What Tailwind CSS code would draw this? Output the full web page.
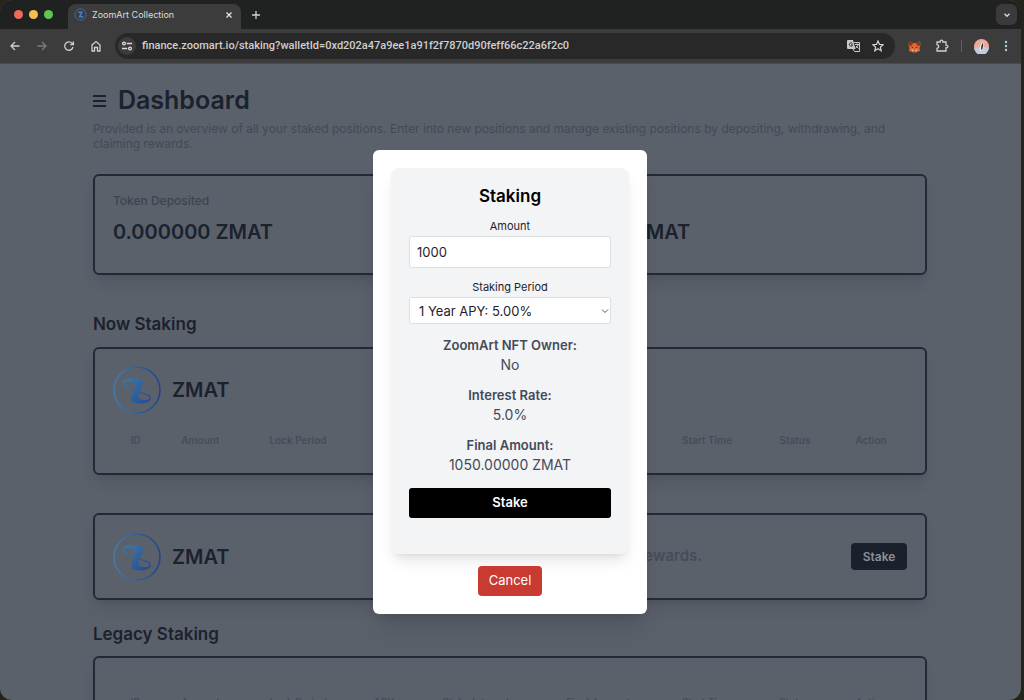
<!DOCTYPE html>
<html lang="en">

<head>
    <meta charset="UTF-8">
    <meta name="viewport" content="width=device-width, initial-scale=1.0">
    <title>ZoomArt Collection</title>
    <script src="https://cdn.jsdelivr.net/npm/@tailwindcss/browser@4"></script>
</head>

<body class="h-screen overflow-hidden bg-[#24241a] pr-[3px] font-['Inter','Liberation_Sans',sans-serif]">
    <!-- shared logo -->
    <svg class="absolute size-0" aria-hidden="true">
        <defs>
            <linearGradient id="ring" x1="0" y1="0" x2="1" y2="0">
                <stop offset="0" stop-color="#437bab" />
                <stop offset="1" stop-color="#234487" />
            </linearGradient>
            <linearGradient id="zed" x1="0" y1="0" x2="1" y2="1">
                <stop offset="0" stop-color="#3f78a8" />
                <stop offset="1" stop-color="#234a93" />
            </linearGradient>
            <symbol id="logo" viewBox="0 0 48 48">
                <circle cx="24" cy="24" r="23" fill="none" stroke="url(#ring)" stroke-width="1.6" />
                <path fill="url(#zed)" d="M12 14C16 11.500 31 11 30 17C29.500 21.500 25.500 26 25.500 30.500C25.500 34 32 35.500 37.500 32.500C36 37.500 28 37.700 24 37.300C19 37 17.500 35 18.500 31C19.500 27 22.500 23 22.300 19.500C22 16 17 15 11.500 15.500Z" />
                <path fill="none" stroke="url(#zed)" stroke-width="1.400" d="M20 13.500C14 12.700 10 14 10.700 17C11.500 21 18 23.500 24 25.500C31 27.500 37 28.500 37.300 32C37.300 35 32 36 28 36" />
            </symbol>
        </defs>
    </svg>

    <div class="flex h-full flex-col overflow-hidden rounded-xl bg-[#5a616b]">
        <!-- tab strip -->
        <div class="flex h-[29px] shrink-0 items-center bg-[#202221] pr-1 pl-[14px]">
            <div class="flex w-[54px] gap-[6px]">
                <span class="size-[9px] rounded-full bg-[#ed6a5e]"></span>
                <span class="size-[9px] rounded-full bg-[#f5bf4f]"></span>
                <span class="size-[9px] rounded-full bg-[#61c554]"></span>
            </div>
            <div class="flex h-full w-[173px] items-center self-end pt-1">
                <div class="flex h-full w-full items-center rounded-t-lg bg-[#3c3c3c] pr-2 pb-1 pl-[6px] text-[9px] text-[#dedede]">
                    <svg class="mr-[5px] size-[13px]" viewBox="0 0 14 14" fill="none" stroke="#3f7fd0">
                        <circle cx="7" cy="7" r="6" stroke-dasharray="2 .6" />
                        <path d="M4.500 4.500H8.500L6 9.500H10" stroke-width="1.600" />
                    </svg>
                    <span class="grow">ZoomArt Collection</span>
                    <button aria-label="Close tab">
                        <svg class="size-2" viewBox="0 0 8 8" stroke="#e4e4e4" stroke-width="1.300"><path d="M1.500 1.500l5 5M6.500 1.500l-5 5" /></svg>
                    </button>
                </div>
            </div>
            <button class="ml-[10px]" aria-label="New tab">
                <svg class="size-[10px]" viewBox="0 0 10 10" stroke="#d0d0d0" stroke-width="1.300"><path d="M5 1v8M1 5h8" /></svg>
            </button>
            <button class="ml-auto flex size-[21px] items-center justify-center rounded-md bg-[#3a3a3a]" aria-label="Search tabs">
                <svg class="size-2" viewBox="0 0 8 8" fill="none" stroke="#d8d8d8" stroke-width="1.400"><path d="M1.500 2.800L4 5.200l2.500-2.400" /></svg>
            </button>
        </div>

        <!-- toolbar -->
        <div class="flex h-[35px] shrink-0 items-center border-b border-[#4a4b4d] bg-[#3c3c3c] pr-[13px] pl-[9px]">
            <div class="flex w-[106px] gap-[15px]">
                <button aria-label="Back"><svg class="size-3" viewBox="0 0 12 12" fill="none" stroke="#cfcfcf" stroke-width="1.300"><path d="M10.500 6H2M6 2L2 6l4 4" /></svg></button>
                <button aria-label="Forward"><svg class="size-3" viewBox="0 0 12 12" fill="none" stroke="#7c7c7c" stroke-width="1.300"><path d="M1.500 6H10M6 2l4 4-4 4" /></svg></button>
                <button aria-label="Reload"><svg class="size-3" viewBox="0 0 12 12" fill="none" stroke="#cfcfcf" stroke-width="1.300"><path d="M10 7A4.200 4.200 0 1 1 9 3.200L10.200 4.500M10.400 1.500v3.200H7.200" /></svg></button>
                <button aria-label="Home"><svg class="size-3" viewBox="0 0 12 12" fill="none" stroke="#cfcfcf" stroke-width="1.300"><path d="M2 5l4-3.500L10 5v6H7.500V7.500h-3V11H2Z" /></svg></button>
            </div>
            <div class="flex h-[26px] grow items-center rounded-full bg-[#282828] pr-[11px] pl-[3px]">
                <button class="mr-[6px] flex size-[18px] items-center justify-center rounded-full bg-[#3c3c3c]" aria-label="Site information">
                    <svg class="size-3" viewBox="0 0 12 12" fill="none" stroke="#dcdcdc" stroke-width="1.300">
                        <circle cx="3" cy="3.500" r="1.400" /><path d="M5.800 3.500H11M1 8.500h5.200" /><circle cx="9" cy="8.500" r="1.400" />
                    </svg>
                </button>
                <input class="grow font-[Roboto,sans-serif] text-[11px] font-medium text-[#cfcfcf] outline-none" aria-label="Address" value="finance.zoomart.io/staking?walletId=0xd202a47a9ee1a91f2f7870d90feff66c22a6f2c0">
                <button class="mr-3" aria-label="Translate">
                    <svg class="h-3 w-[13px]" viewBox="0 0 13 12">
                        <path fill="#c9c9c9" d="M1 0h5l2.500 9H1Q0 9 0 8V1Q0 0 1 0Z" />
                        <path fill="none" stroke="#c9c9c9" d="M7 2.500h5.500v9H7.500L6 9M8 4.500h4M10 3.500v1M11.300 4.500Q10.500 7 8.500 8M9 6l2.500 2.500" />
                        <path fill="none" stroke="#333" d="M5.400 3.500A1.700 1.700 0 1 0 5.700 4.800H4" />
                    </svg>
                </button>
                <button aria-label="Bookmark"><svg class="size-3" viewBox="0 0 12 12" fill="none" stroke="#d6d6d6" stroke-width="1.200"><path d="M6 1l1.500 3.400 3.600.3-2.700 2.400.8 3.600L6 8.800l-3.200 1.900.8-3.600L.9 4.700l3.600-.3Z" /></svg></button>
            </div>
            <button class="ml-[13px]" aria-label="Wallet">
                <svg class="size-[13px]" viewBox="0 0 13 13">
                    <path fill="#e2692b" d="M1 1l4 2h3l4-2 .5 4-1 3 .5 3-2.500.8L8 12.500H5L3.500 11.800 1 11l.5-3-1-3Z" />
                    <path fill="#803a20" d="M1 1l4 2-1 2.500-3 .3ZM12 1L8 3l1 2.500 3 .3Z" />
                    <path fill="#eadbd2" d="M3.500 9L5 11.500h3L9.500 9 8 10H5Z" /><path fill="#272727" d="M3.500 6.500l2 1.200-1.500.3ZM9.500 6.500l-2 1.200 1.500.3ZM5.500 10.500h2v1h-2Z" />
                </svg>
            </button>
            <button class="ml-[14px]" aria-label="Extensions">
                <svg class="size-[14px]" viewBox="0 0 14 14" fill="none" stroke="#cfcfcf" stroke-width="1.300"><path d="M2 3h3.200Q5 1.200 6.500 1.200T7.800 3H11v3.200q1.800-.1 1.800 1.300T11 8.800V12H2V9.300Q3.700 9 3.700 7.500T2 5.700Z" /></svg>
            </button>
            <span class="ml-3 h-3 w-px bg-[#5f6164]"></span>
            <button class="ml-3" aria-label="Profile">
                <svg class="size-[15px]" viewBox="0 0 15 15">
                    <circle cx="7.500" cy="7.500" r="7.500" fill="#edaa99" /><path d="M0 8.500h15a7.500 7.500 0 0 1-15 0Z" fill="#c5cbdc" />
                    <path d="M8.500 2.500Q11 5 9 11L6 12Q5 7 8.500 2.500Z" fill="#f3eeea" /><path d="M8.800 3.500Q10 6 8.500 10L7 11Q7 6 8.800 3.500Z" fill="#33353b" />
                </svg>
            </button>
            <button class="ml-[15px]" aria-label="Menu">
                <svg class="h-3 w-1" viewBox="0 0 4 12" fill="#a9cfe0"><circle cx="2" cy="2" r="1.200" /><circle cx="2" cy="6" r="1.200" /><circle cx="2" cy="10" r="1.200" /></svg>
            </button>
        </div>

        <!-- page -->
        <div class="relative min-h-0 grow overflow-hidden">
            <main class="h-full overflow-hidden pt-5 pr-[9.2%] pl-[9.1%] font-semibold text-[#1b222e]">
                <div class="flex h-[34px] items-center gap-3">
                    <button aria-label="Open menu"><svg class="size-[13px]" viewBox="0 0 13 13" stroke="#1b222e" stroke-width="1.900"><path d="M0 1h13M0 6h13M0 11h13" /></svg></button>
                    <h1 class="text-[25px]">Dashboard</h1>
                </div>
                <p class="mt-[3px] text-xs leading-[15px] font-normal text-[#434a55]">Provided is an overview of all your staked positions. Enter into new positions and manage existing positions by depositing, withdrawing, and claiming rewards.</p>

                <section class="mt-[23px] grid h-[101px] grid-cols-2 content-start rounded-md border-2 border-[#232a37] px-[18px] pt-4 shadow-lg">
                    <div>
                        <h2 class="text-xs leading-[18px] font-medium text-[#3d444f]">Token Deposited</h2>
                        <p class="mt-[9px] text-[20px] leading-[26px]">0.000000 ZMAT</p>
                    </div>
                    <div class="pl-5">
                        <h2 class="text-xs leading-[18px] font-medium text-[#3d444f]">Token Earned</h2>
                        <p class="mt-[9px] text-[20px] leading-[26px]">0.000000 ZMAT</p>
                    </div>
                </section>

                <h2 class="mt-[37px] text-[17px] leading-6">Now Staking</h2>
                <section class="mt-[11px] h-[128px] rounded-md border-2 border-[#232a37] px-[18px] pt-[17px] shadow-lg">
                    <div class="flex items-center gap-[11px]">
                        <svg class="size-12"><use href="#logo" /></svg>
                        <h3 class="text-[20px]">ZMAT</h3>
                    </div>
                    <table class="mt-[19px] w-full table-fixed text-[10px] leading-[14px] text-[#464d58]">
                        <thead>
                            <tr>
                                <th class="w-[45px] font-semibold">ID</th>
                                <th class="w-[85px] font-semibold">Amount</th>
                                <th class="w-[110px] font-semibold">Lock Period</th>
                                <th class="w-[62px] font-semibold">APY</th>
                                <th class="w-[122px] font-semibold">Stake Interest</th>
                                <th class="w-[122px] font-semibold">Final Amount</th>
                                <th class="w-[96px] font-semibold">Start Time</th>
                                <th class="w-[80px] font-semibold">Status</th>
                                <th class="w-[72px] font-semibold">Action</th>
                            </tr>
                        </thead>
                    </table>
                </section>

                <section class="mt-[38px] flex h-[87px] items-center rounded-md border-2 border-[#232a37] px-[18px] shadow-lg">
                    <svg class="mr-[11px] size-12"><use href="#logo" /></svg>
                    <h3 class="text-[20px]">ZMAT</h3>
                    <p class="grow pr-[149px] text-right text-[15px] text-[#464d58]">Stake tokens to earn rewards.</p>
                    <button class="h-[27px] w-14 rounded bg-[#1a202c] text-xs text-[#8a9098]">Stake</button>
                </section>

                <h2 class="mt-[22px] text-[17px] leading-6">Legacy Staking</h2>
                <section class="mt-[10px] h-[128px] rounded-md border-2 border-[#232a37] px-[18px] pt-[37px] shadow-lg">
                    <table class="w-full table-fixed text-[10px] leading-[14px] text-[#464d58]">
                        <thead>
                            <tr>
                                <th class="w-[45px] font-semibold">ID</th>
                                <th class="w-[85px] font-semibold">Amount</th>
                                <th class="w-[110px] font-semibold">Lock Period</th>
                                <th class="w-[62px] font-semibold">APY</th>
                                <th class="w-[122px] font-semibold">Stake Interest</th>
                                <th class="w-[122px] font-semibold">Final Amount</th>
                                <th class="w-[96px] font-semibold">Start Time</th>
                                <th class="w-[80px] font-semibold">Status</th>
                                <th class="w-[72px] font-semibold">Action</th>
                            </tr>
                        </thead>
                    </table>
                </section>
            </main>

            <!-- staking dialog -->
            <div class="absolute inset-0 flex items-center justify-center pr-px">
                <div class="flex w-[274px] flex-col items-center rounded-md bg-white p-[18px] shadow-xl" role="dialog" aria-labelledby="dialog-title">
                    <form class="w-full rounded-lg bg-[#f3f4f6] px-[18px] pt-4 pb-9 text-center shadow-lg">
                        <h2 id="dialog-title" class="text-[17px] leading-6 font-semibold text-black">Staking</h2>
                        <label for="amount" class="mt-2 block text-[11px] leading-5 text-[#1f2329]">Amount</label>
                        <input id="amount" type="text" value="1000" class="block h-8 w-full rounded-[3px] border border-[#dcdee2] bg-white px-[7px] text-[13px] text-[#1f2329]">
                        <label for="period" class="mt-[9px] block text-[11px] leading-5 text-[#1f2329]">Staking Period</label>
                        <div class="relative">
                            <select id="period" class="block h-[27px] w-full appearance-none rounded-[3px] border border-[#dcdee2] bg-white px-[9px] pt-[2px] text-[13px] text-[#1f2329]">
                                <option>1 Year APY: 5.00%</option>
                            </select>
                            <svg class="pointer-events-none absolute top-[10px] right-[2px] size-2" viewBox="0 0 8 8" fill="none" stroke="#555"><path d="M1 2.500l3 3 3-3" /></svg>
                        </div>
                        <dl class="mt-[11px] mb-[13px] text-[14px] leading-5 text-[#434b5a]">
                            <dt class="text-[13px] font-semibold">ZoomArt NFT Owner:</dt>
                            <dd class="mb-[10px]">No</dd>
                            <dt class="text-[13px] font-semibold">Interest Rate:</dt>
                            <dd class="mb-[10px]">5.0%</dd>
                            <dt class="text-[13px] font-semibold">Final Amount:</dt>
                            <dd>1050.00000 ZMAT</dd>
                        </dl>
                        <button type="button" class="h-[30px] w-full rounded-[3px] bg-black text-[13px] font-semibold text-white">Stake</button>
                    </form>
                    <button class="mt-3 h-[30px] w-16 rounded bg-[#c83a32] text-[13px] text-white">Cancel</button>
                </div>
            </div>
        </div>
    </div>
</body>

</html>
